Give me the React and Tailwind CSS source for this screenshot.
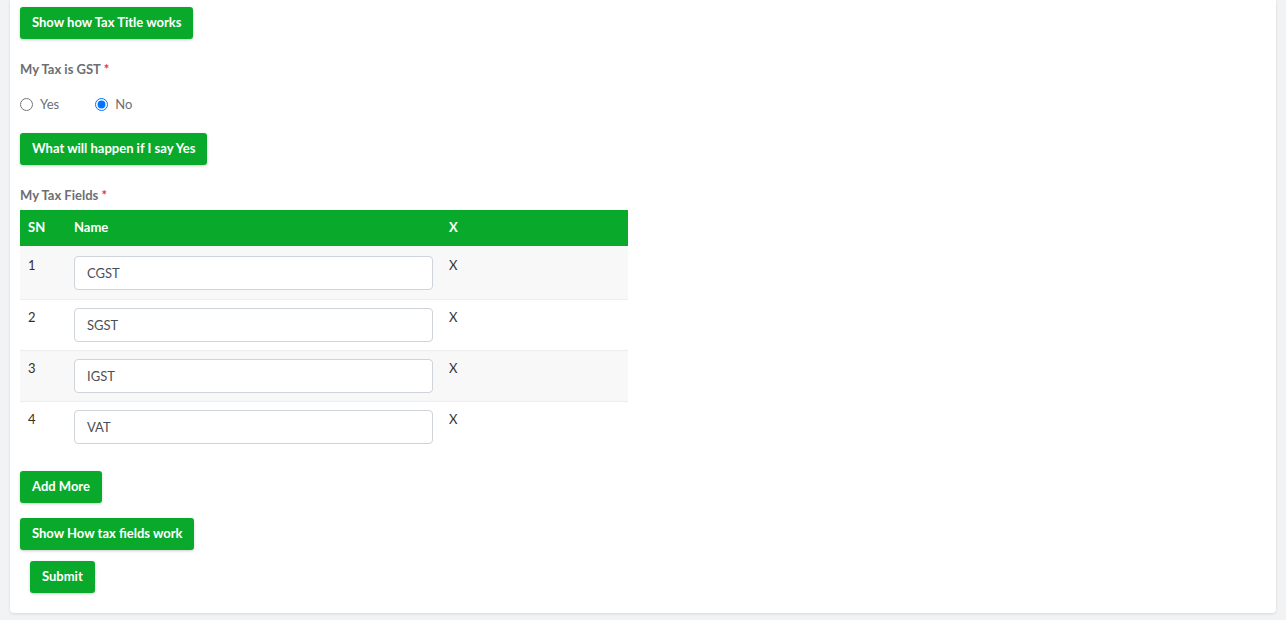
import { useState } from 'react';

const GreenButton = ({ children, className = '' }) => (
  <button
    type="button"
    className={`h-[32px] rounded-[3px] bg-[#09aa2c] px-3 text-[13px] font-bold text-white shadow-[0_1px_3px_rgba(0,0,0,0.2)] ${className}`}
  >
    {children}
  </button>
);

const Label = ({ children }) => (
  <p className="text-[13px] font-bold text-[#6c6f73]">
    {children} <span className="text-[#dc3545]">*</span>
  </p>
);

const App = () => {
  const [gst, setGst] = useState('no');
  const [fields, setFields] = useState(['CGST', 'SGST', 'IGST', 'VAT']);

  return (
    <div className="min-h-[620px] bg-[#f2f3f5] px-[10px] pb-[7px] font-['Lato','Liberation_Sans',sans-serif]">
      <div className="rounded-b-[4px] bg-white px-[10px] pb-[20px] pt-[7px] shadow-[0_1px_3px_rgba(0,0,0,0.12)]">
        <GreenButton>Show how Tax Title works</GreenButton>

        <div className="mt-[21px]">
          <Label>My Tax is GST</Label>
        </div>

        {/* GST radio */}
        <div className="mt-[15px] flex h-[20px] items-center text-[13px] text-[#6c6f73]">
          <label className="flex items-center gap-[7px]">
            <input
              type="radio"
              className="m-0 h-[13px] w-[13px]"
              checked={gst === 'yes'}
              onChange={() => setGst('yes')}
            />
            Yes
          </label>
          <label className="ml-[36px] flex items-center gap-[7px]">
            <input
              type="radio"
              className="m-0 h-[13px] w-[13px]"
              checked={gst === 'no'}
              onChange={() => setGst('no')}
            />
            No
          </label>
        </div>

        <GreenButton className="mt-[18px]">What will happen if I say Yes</GreenButton>

        <div className="mt-[21px]">
          <Label>My Tax Fields</Label>
        </div>

        {/* Tax fields table */}
        <table className="mt-[5px] w-[608px] border-collapse text-[13px]">
          <thead>
            <tr className="h-[36px] bg-[#09aa2c] text-left font-bold text-white">
              <th className="w-[54px] pl-2">SN</th>
              <th className="w-[375px]">Name</th>
              <th>X</th>
            </tr>
          </thead>
          <tbody>
            {fields.map((f, i) => (
              <tr
                key={i}
                className={`align-top ${i === 0 ? 'h-[53px]' : 'h-[51px] border-t border-[#eceef0]'} ${i % 2 === 0 ? 'bg-[#f8f8f8]' : 'bg-white'}`}
              >
                <td className={`pl-2 text-[#3a2f22] ${i === 0 ? 'pt-[10px]' : 'pt-[8px]'}`}>{i + 1}</td>
                <td className={i === 0 ? 'pt-[10px]' : 'pt-[8px]'}>
                  <input
                    value={f}
                    onChange={(e) => {
                      const next = [...fields];
                      next[i] = e.target.value;
                      setFields(next);
                    }}
                    className="h-[34px] w-[359px] rounded-[4px] border border-[#ced4da] bg-white px-3 text-[13px] text-[#495057] outline-none"
                  />
                </td>
                <td className={`text-[#333] ${i === 0 ? 'pt-[10px]' : 'pt-[8px]'}`}>X</td>
              </tr>
            ))}
          </tbody>
        </table>

        <div className="mt-[19px] flex flex-col items-start">
          <GreenButton>Add More</GreenButton>
          <GreenButton className="mt-[15px]">Show How tax fields work</GreenButton>
          <GreenButton className="ml-[10px] mt-[11px]">Submit</GreenButton>
        </div>
      </div>
    </div>
  );
};

export default App;
